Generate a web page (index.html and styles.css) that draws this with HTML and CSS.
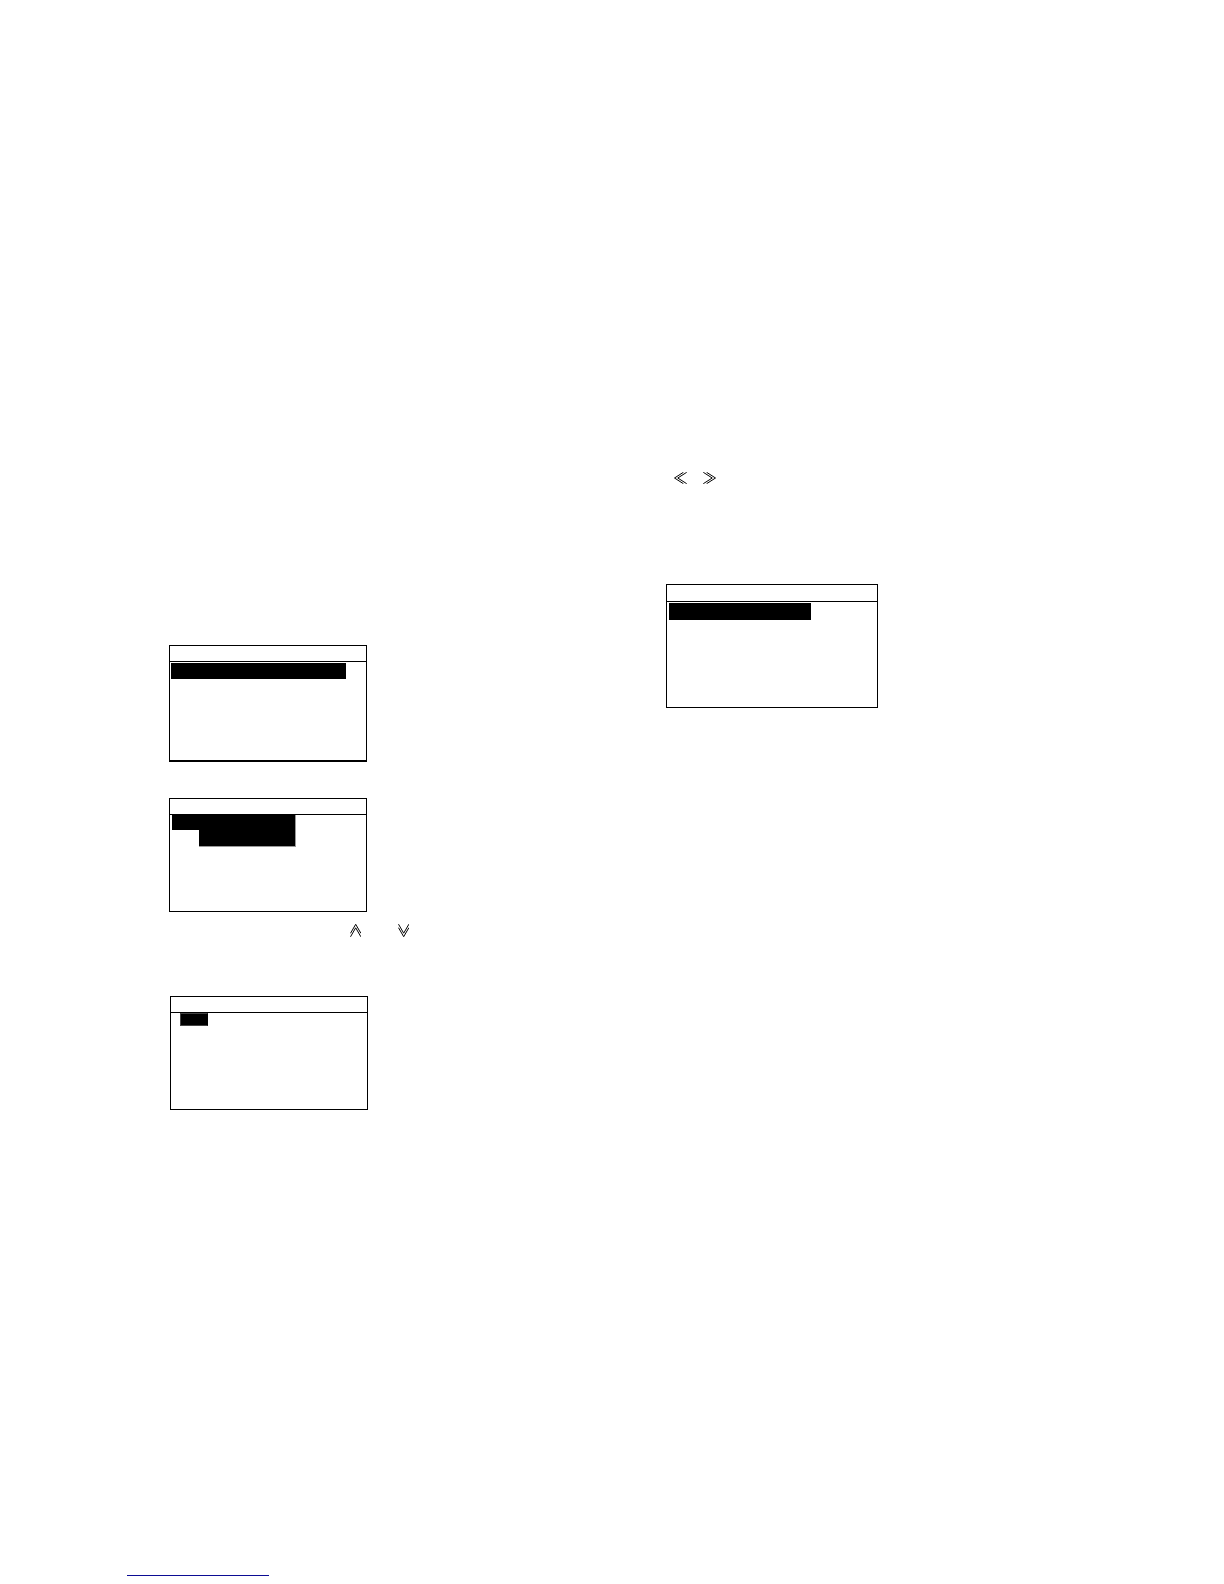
FILE: index.html
```html
<!DOCTYPE html>
<html lang="en">
<head>
    <meta charset="UTF-8">
    <meta name="viewport" content="width=device-width, initial-scale=1.0">
    <title>Menu Screens</title>
    <link rel="stylesheet" href="styles.css">
</head>
<body>
    <main class="columns">
        <section class="column column-left">
            <div class="screen screen-main">
                <div class="screen-title"></div>
                <div class="highlight highlight-wide"></div>
            </div>

            <div class="screen screen-sub">
                <div class="screen-title"></div>
                <div class="highlight highlight-first"></div>
                <div class="highlight highlight-second"></div>
            </div>

            <div class="keys keys-vertical">
                <svg class="key-v" viewBox="0 0 11 13" aria-hidden="true">
                    <path d="M0.5 9.3 L5.7 0.3 L10.9 9.3 M0.5 12.8 L5.7 3.8 L10.9 12.8"/>
                </svg>
                <svg class="key-v" viewBox="0 0 11 13" aria-hidden="true">
                    <path d="M0.5 0.2 L5.7 9.2 L10.9 0.2 M0.5 3.7 L5.7 12.7 L10.9 3.7"/>
                </svg>
            </div>

            <div class="screen screen-edit">
                <div class="screen-title"></div>
                <div class="highlight highlight-small"></div>
            </div>
        </section>

        <section class="column column-right">
            <div class="keys keys-horizontal">
                <svg class="key-h" viewBox="0 0 13 12" aria-hidden="true">
                    <path d="M9.4 0.3 L0.5 6 L9.4 11.7 M12.7 0.3 L3.8 6 L12.7 11.7"/>
                </svg>
                <svg class="key-h" viewBox="0 0 13 12" aria-hidden="true">
                    <path d="M3.6 0.3 L12.5 6 L3.6 11.7 M0.3 0.3 L9.2 6 L0.3 11.7"/>
                </svg>
            </div>

            <div class="screen screen-large">
                <div class="screen-title"></div>
                <div class="highlight highlight-large"></div>
            </div>
        </section>
    </main>

    <footer class="footer">
        <a class="footer-link" href="#" aria-label="Home"></a>
    </footer>
</body>
</html>
```

FILE: styles.css
```css
* {
    box-sizing: border-box;
}
body {
    font-family: "Liberation Sans", Arial, sans-serif;
    margin: 0;
    min-height: 100vh;
    display: flex;
    flex-direction: column;
    background: #fff;
}
.columns {
    display: grid;
    grid-template-columns: 1fr 1fr;
    padding: 0 61px 0 169px;
}
.column {
    display: flex;
    flex-direction: column;
    align-items: flex-start;
}
.column-left {
    padding-top: 645px;
}
.column-right {
    padding-top: 472px;
}

/* LCD screens */
.screen {
    width: 198px;
    min-height: 114px;
    border: 1px solid #000;
}
.screen-title {
    height: 16px;
    border-bottom: 1px solid #000;
}
.screen-main {
    min-height: 117px;
    border-bottom-width: 2px;
    margin-bottom: 36px;
}
.screen-edit {
    margin-left: 1px;
}
.screen-large {
    width: 212px;
    min-height: 124px;
}
.screen-large .screen-title {
    height: 17px;
}

/* selected rows */
.highlight {
    background: #000;
    height: 16px;
}
.highlight-wide {
    width: 175px;
    margin: 1px 0 0 1px;
}
.highlight-first {
    width: 124px;
    height: 15px;
    margin-left: 2px;
    border-right: 1px solid #999;
}
.highlight-second {
    width: 97px;
    height: 17px;
    margin-left: 29px;
    border-right: 1px solid #999;
    border-bottom: 1px solid #999;
}
.highlight-small {
    width: 28px;
    height: 13px;
    margin-left: 9px;
    border: 1px solid #444;
    border-right-color: #000;
}
.highlight-large {
    width: 142px;
    height: 17px;
    margin: 1px 0 0 2px;
}

/* arrow keys */
.keys {
    display: flex;
}
.keys svg {
    fill: none;
    stroke: #000;
    stroke-width: 1;
}
.keys-vertical {
    gap: 37px;
    margin: 12px 0 59px 181px;
}
.keys-horizontal {
    gap: 16px;
    margin: 0 0 100px 8px;
}
.key-v {
    width: 11px;
    height: 13px;
}
.key-h {
    width: 13px;
    height: 12px;
}

.footer {
    margin-top: auto;
    padding: 0 0 8px 127px;
}
.footer-link {
    display: block;
    width: 142px;
    height: 16px;
    border-bottom: 1px solid #0c0c94;
}
```
